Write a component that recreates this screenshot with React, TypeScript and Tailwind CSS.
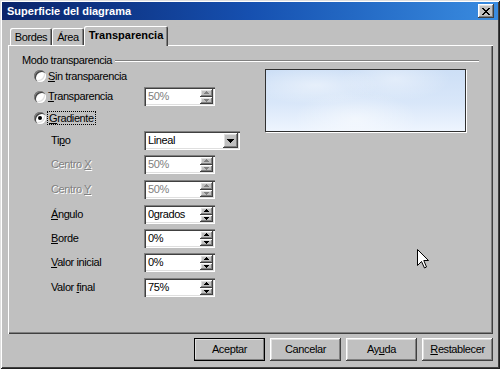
import type { ReactNode } from 'react';

const raised =
  'shadow-[inset_-1px_-1px_0_#404040,inset_1px_1px_0_#ffffff,inset_-2px_-2px_0_#808080,inset_2px_2px_0_#dfdfdf]';
const sunken =
  'shadow-[inset_1px_1px_0_#808080,inset_2px_2px_0_#404040,inset_-1px_-1px_0_#ffffff,inset_-2px_-2px_0_#dfdfdf]';
const disabledText = 'text-[#808080] [text-shadow:1px_1px_0_#ffffff]';

function Tri({ up, color }: { up?: boolean; color: string }) {
  const rows = up ? [[2, 1], [1, 3], [0, 5]] : [[0, 5], [1, 3], [2, 1]];
  return (
    <svg width="5" height="3" viewBox="0 0 5 3" shapeRendering="crispEdges">
      {rows.map(([x, w], i) => (
        <rect key={i} x={x} y={i} width={w} height={1} fill={color} />
      ))}
    </svg>
  );
}

function Spin({ value, disabled }: { value: string; disabled?: boolean }) {
  const c = disabled ? '#808080' : '#000000';
  return (
    <div className={`flex shrink-0 w-[71px] h-[19px] bg-white ${sunken}`}>
      <span className={`flex-1 flex items-center pl-[4px] ${disabled ? 'text-[#808080]' : 'text-black'}`}>
        {value}
      </span>
      <div className="flex flex-col w-[13px] my-[2px] mr-[2px]">
        <div className={`flex-1 flex items-center justify-center bg-[#c0c0c0] ${raised}`}>
          <Tri up color={c} />
        </div>
        <div className={`flex-1 flex items-center justify-center bg-[#c0c0c0] ${raised}`}>
          <Tri color={c} />
        </div>
      </div>
    </div>
  );
}

function Radio({ checked }: { checked?: boolean }) {
  return (
    <div className="shrink-0 w-[12px] h-[12px] rounded-full bg-white flex items-center justify-center shadow-[inset_1px_1px_0_#808080,inset_2px_2px_0_#404040,inset_-1px_-1px_0_#ffffff,inset_-2px_-2px_0_#dfdfdf]">
      {checked && <div className="w-[4px] h-[4px] rounded-full bg-black" />}
    </div>
  );
}

function FieldRow({ label, disabled, mt, children }: { label: ReactNode; disabled?: boolean; mt: string; children: ReactNode }) {
  return (
    <div className={`flex items-center h-[19px] ${mt}`}>
      <div className={`shrink-0 w-[110px] pl-[17px] ${disabled ? disabledText : ''}`}>{label}</div>
      {children}
    </div>
  );
}

function Btn({ children, def }: { children: ReactNode; def?: boolean }) {
  return (
    <div
      className={`w-[71px] h-[23px] flex items-center justify-center bg-[#c0c0c0] ${raised} ${
        def ? 'outline outline-1 outline-black -outline-offset-1' : ''
      }`}
    >
      {children}
    </div>
  );
}

export default function App() {
  return (
    <div className="relative w-[500px] h-[369px] bg-[#c0c0c0] pt-[2px] px-[2px] font-['Liberation_Sans',Arial,sans-serif] text-[11px] tracking-[-0.4px] text-black shadow-[inset_1px_1px_0_#dfdfdf,inset_-1px_-1px_0_#202020,inset_2px_2px_0_#ffffff,inset_-2px_-2px_0_#404040] overflow-hidden">
      {/* title bar */}
      <div className="h-[18px] flex items-center pl-[5px] pr-[4px] bg-gradient-to-r from-[#0a246a] via-[#1650b0] to-[#3a8ce0]">
        <span className="text-white font-bold tracking-normal flex-1">Superficie del diagrama</span>
        <div className={`w-[16px] h-[14px] bg-[#c0c0c0] flex items-center justify-center ${raised}`}>
          <svg width="8" height="7" viewBox="0 0 8 7" shapeRendering="crispEdges">
            {[
              [0, 0, 2], [6, 0, 2], [1, 1, 2], [5, 1, 2], [2, 2, 4], [3, 3, 2], [2, 4, 4], [1, 5, 2], [5, 5, 2], [0, 6, 2], [6, 6, 2],
            ].map(([x, y, w], i) => (
              <rect key={i} x={x} y={y} width={w} height={1} fill="#000" />
            ))}
          </svg>
        </div>
      </div>

      <div className="ml-[6px] mr-[5px]">
        {/* tabs */}
        <div className="mt-[6px] h-[19px] flex items-end pl-[2px]">
          <div className="w-[42px] h-[17px] flex items-center justify-center pt-[2px] rounded-t-[2px] shadow-[inset_1px_1px_0_#ffffff,inset_-1px_0_0_#404040,inset_-2px_0_0_#808080]">
            Bordes
          </div>
          <div className="w-[32px] h-[17px] flex items-center justify-center pt-[2px] rounded-t-[2px] shadow-[inset_1px_1px_0_#ffffff,inset_-1px_0_0_#404040,inset_-2px_0_0_#808080]">
            Área
          </div>
          <div className="relative z-10 w-[84px] h-[20px] mb-[-1px] bg-[#c0c0c0] flex items-center justify-center pb-[1px] font-bold tracking-normal rounded-t-[2px] shadow-[inset_1px_1px_0_#ffffff,inset_-1px_0_0_#404040,inset_-2px_0_0_#808080]">
            Transparencia
          </div>
        </div>

        {/* panel */}
        <div className="h-[289px] pt-[10px] shadow-[inset_1px_1px_0_#ffffff,inset_-1px_-1px_0_#404040,inset_-2px_-2px_0_#808080]">
          <div className="h-[11px] flex items-center pl-[14px] pr-[14px]">
            <span className="pr-[3px]">Modo transparencia</span>
            <div className="flex-1 h-[2px] border-t border-[#808080] border-b border-b-white" />
          </div>

          <div className="flex">
            <div className="shrink-0 w-[257px] pl-[26px]">
              <div className="flex items-center h-[20px]">
                <Radio />
                <span className="pl-[2px]">
                  <span className="underline">S</span>in transparencia
                </span>
              </div>
              <div className="flex items-center h-[19px] mt-[1px]">
                <div className="shrink-0 w-[110px] flex items-center">
                  <Radio />
                  <span className="pl-[2px]">
                    <span className="underline">T</span>ransparencia
                  </span>
                </div>
                <Spin value="50%" disabled />
              </div>
              <div className="flex items-center h-[20px] mt-[2px]">
                <Radio checked />
                <span className="ml-[1px] px-[1px] border border-dotted border-black leading-[12px]">
                  <span className="underline">G</span>radiente
                </span>
              </div>
              <FieldRow mt="mt-[3px]" label={<>Ti<span className="underline">p</span>o</>}>
                <div className={`flex shrink-0 w-[96px] h-[19px] bg-white ${sunken}`}>
                  <span className="flex-1 flex items-center pl-[4px]">Lineal</span>
                  <div className={`w-[15px] my-[2px] mr-[2px] flex items-center justify-center bg-[#c0c0c0] ${raised}`}>
                    <svg width="7" height="4" viewBox="0 0 7 4" shapeRendering="crispEdges">
                      {[[0, 7], [1, 5], [2, 3], [3, 1]].map(([x, w], i) => (
                        <rect key={i} x={x} y={i} width={w} height={1} fill="#000" />
                      ))}
                    </svg>
                  </div>
                </div>
              </FieldRow>
              <FieldRow mt="mt-[5px]" disabled label={<>Centro <span className="underline">X</span></>}>
                <Spin value="50%" disabled />
              </FieldRow>
              <FieldRow mt="mt-[6px]" disabled label={<>Centro <span className="underline">Y</span></>}>
                <Spin value="50%" disabled />
              </FieldRow>
              <FieldRow mt="mt-[6px]" label={<><span className="underline">Á</span>ngulo</>}>
                <Spin value="0grados" />
              </FieldRow>
              <FieldRow mt="mt-[5px]" label={<><span className="underline">B</span>orde</>}>
                <Spin value="0%" />
              </FieldRow>
              <FieldRow mt="mt-[5px]" label={<><span className="underline">V</span>alor inicial</>}>
                <Spin value="0%" />
              </FieldRow>
              <FieldRow mt="mt-[6px]" label={<>Valor <span className="underline">f</span>inal</>}>
                <Spin value="75%" />
              </FieldRow>
            </div>

            <div className="shrink-0 mt-[3px] w-[201px] h-[63px] border border-[#303030] shadow-[1px_1px_0_#ffffff] bg-[radial-gradient(ellipse_at_25%_25%,rgba(255,255,255,0.45),transparent_30%),radial-gradient(ellipse_at_65%_15%,rgba(255,255,255,0.4),transparent_30%),radial-gradient(ellipse_at_45%_80%,rgba(255,255,255,0.5),transparent_40%),linear-gradient(180deg,#cddff6,#d9e7f9_55%,#eef5fe)]" />
          </div>
        </div>

        {/* buttons */}
        <div className="mt-[4px] flex justify-end gap-[5px]">
          <Btn def>Aceptar</Btn>
          <Btn>Cancelar</Btn>
          <Btn>
            <span>
              Ay<span className="underline">u</span>da
            </span>
          </Btn>
          <Btn>
            <span>
              <span className="underline">R</span>establecer
            </span>
          </Btn>
        </div>
      </div>

      {/* mouse pointer */}
      <svg className="absolute left-[417px] top-[249px]" width="13" height="20" viewBox="0 0 13 20">
        <path d="M0.5 0.5 L0.5 16.5 L4.5 12.5 L7.5 19 L9.5 18 L6.8 11.5 L11.5 11.5 Z" fill="#fff" stroke="#000" strokeWidth="1" />
      </svg>
    </div>
  );
}
